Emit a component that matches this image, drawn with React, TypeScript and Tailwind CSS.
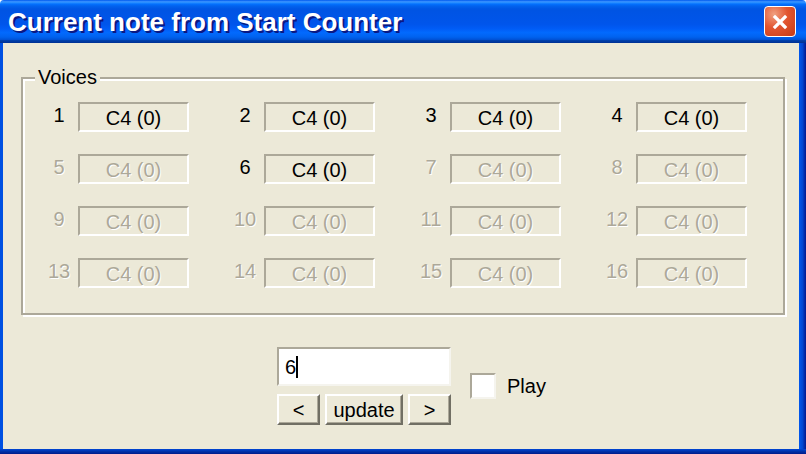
import React from 'react';

const voices = Array.from({ length: 16 }, (_, i) => ({
  id: i + 1,
  note: 'C4 (0)',
  enabled: [1, 2, 3, 4, 6].includes(i + 1),
}));

const font = { fontFamily: '"Liberation Sans", Arial, sans-serif' };

const VoiceCell = ({ id, note, enabled }: { id: number; note: string; enabled: boolean }) => {
  const txt = enabled ? 'text-black' : 'text-[#ACA899] [text-shadow:1px_1px_0_#ffffff]';
  return (
    <div className="flex items-center">
      <span className={`w-[28px] text-center text-[20px] leading-none -mt-[4px] ${txt}`}>{id}</span>
      <div className="ml-[5px] w-[111px] h-[30px] flex items-center justify-center border-2 border-t-[#ACA899] border-l-[#ACA899] border-b-white border-r-white">
        <span className={`text-[20px] leading-none mt-[1px] ${txt}`}>{note}</span>
      </div>
    </div>
  );
};

const XpButton = ({ label, w }: { label: string; w: string }) => (
  <button
    className={`${w} h-[31px] flex items-center justify-center bg-[#ECE9D8] border-2 border-t-white border-l-white border-b-[#716F64] border-r-[#716F64] shadow-[inset_-1px_-1px_0_#ACA899] text-[20px] leading-none text-black`}
  >
    {label}
  </button>
);

export default function App() {
  return (
    <div className="w-[806px] h-[454px] flex flex-col select-none" style={font}>
      {/* title bar */}
      <div className="h-[43px] flex items-center justify-between pl-[8px] pr-[10px] rounded-t-[4px] bg-[linear-gradient(to_bottom,#0058EE_0%,#3A93FF_4%,#288EFF_6%,#127DFF_8%,#036FFC_10%,#0262EE_14%,#0057E5_20%,#0054E3_24%,#0055EB_56%,#005BF5_66%,#026AFE_76%,#0062EF_86%,#0052D6_92%,#0040AB_94%,#003092_100%)]">
        <span className="text-white font-bold text-[26px] leading-none [text-shadow:2px_2px_0_#0A1883]">
          Current note from Start Counter
        </span>
        <div className="w-[32px] h-[31px] rounded-[4px] border-[1.5px] border-white bg-[radial-gradient(circle_at_30%_25%,#F0A080_0%,#E2552F_45%,#C63A16_100%)] flex items-center justify-center">
          <svg width="16" height="16" viewBox="0 0 16 16">
            <path d="M3 3 L13 13 M13 3 L3 13" stroke="white" strokeWidth="3.2" strokeLinecap="square" />
          </svg>
        </div>
      </div>

      <div className="flex-1 flex">
        <div className="w-[3px] bg-[#0050E2]" />
        <div className="flex-1 flex flex-col bg-[#ECE9D8] pt-[34px] pl-[18px]">
          {/* Voices group */}
          <div className="relative w-[764px] h-[238px] border-2 border-[#ACA899] shadow-[inset_2px_2px_0_#ffffff,2px_2px_0_#ffffff] pt-[23px] pl-[22px]">
            <span className="absolute left-[12px] -top-[12px] px-[3px] bg-[#ECE9D8] text-[20px] leading-none text-black">
              Voices
            </span>
            <div className="grid grid-cols-[repeat(4,144px)] gap-x-[42px] gap-y-[22px]">
              {voices.map((v) => (
                <VoiceCell key={v.id} {...v} />
              ))}
            </div>
          </div>

          {/* controls */}
          <div className="flex items-center mt-[32px] ml-[256px]">
            <div className="flex flex-col gap-[8px]">
              <div className="w-[174px] h-[39px] bg-white border-2 border-t-[#ACA899] border-l-[#ACA899] border-b-[#F5F4EE] border-r-[#F5F4EE] flex items-center pl-[6px]">
                <span className="text-[20px] leading-none text-black">6</span>
                <span className="w-[2px] h-[22px] bg-black" />
              </div>
              <div className="flex gap-[5px]">
                <XpButton label="<" w="w-[43px]" />
                <XpButton label="update" w="w-[78px]" />
                <XpButton label=">" w="w-[43px]" />
              </div>
            </div>
            <div className="ml-[19px] w-[26px] h-[26px] bg-white border-2 border-t-[#ACA899] border-l-[#ACA899] border-b-[#F5F4EE] border-r-[#F5F4EE]" />
            <span className="ml-[11px] text-[20px] leading-none text-black">Play</span>
          </div>
        </div>
        <div className="w-[7px] bg-[linear-gradient(to_right,#0058EE,#0046D0,#00188F)]" />
      </div>
      <div className="h-[5px] bg-[linear-gradient(to_bottom,#0046D5,#0030A8,#001A8A)]" />
    </div>
  );
}
